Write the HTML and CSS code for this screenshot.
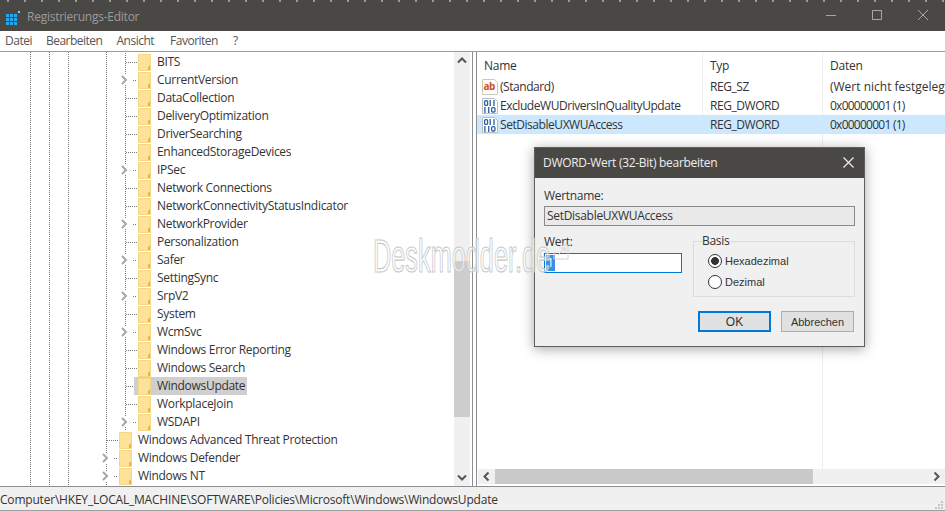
FILE: index.html
```html
<!DOCTYPE html>
<html lang="de">
<head>
<meta charset="utf-8">
<title>Registrierungs-Editor</title>
<link rel="stylesheet" href="styles.css">
</head>
<body>
<svg class="defs" width="0" height="0" aria-hidden="true">
  <symbol id="folder" viewBox="0 0 13 17">
    <path d="M.5 .5H12.500V16.500H.5Z" fill="#fde39a" stroke="#f4d684"/>
    <path d="M10 16V13L12 11V16Z" fill="#e2b64c"/>
  </symbol>
  <symbol id="chev-r" viewBox="0 0 19 10">
    <path d="M3 1L7 5L3 9" fill="none" stroke="#a6a6a6" stroke-width="2"/>
    <path d="M14 5.500H15M16 5.500H17" stroke="#777"/>
  </symbol>
  <symbol id="bin" viewBox="0 0 16 16">
    <path d="M.5 .5H12.500L15.500 3.500V15.500H.5Z" fill="#fff" stroke="#bdbdbd"/>
    <g fill="none" stroke="#2b5fa5" stroke-width="1.300">
      <rect x="2.600" y="2.600" width="3" height="4.800" rx="1.200"/>
      <path d="M8.200 2V8M12 2V8M2.900 9V15M6.700 9V15"/>
      <rect x="9.600" y="9.600" width="3.400" height="4.400" rx="1.200"/>
    </g>
  </symbol>
  <symbol id="ab" viewBox="0 0 16 16">
    <path d="M.5 .5H12.500L15.500 3.500V15.500H.5Z" fill="#fff" stroke="#cfc6bd"/>
    <text x="1.500" y="11" class="abtext">ab</text>
  </symbol>
</svg>

<div class="topstrip"></div>
<header class="titlebar">
  <svg class="appicon" viewBox="0 0 14 14" width="14" height="14">
    <path d="M0 3H3V6H0ZM4 3H7V6H4ZM8 3H11V6H8ZM0 7H3V10H0ZM4 7H7V10H4ZM8 7H11V10H8ZM0 11H3V14H0ZM4 11H7V14H4ZM8 11H11V14H8Z" fill="#2aa7e8"/>
    <path d="M12 0H14V2H12Z" fill="#7fd0f5"/>
  </svg>
  <span class="apptitle">Registrierungs-Editor</span>
  <div class="winctrls">
    <svg viewBox="0 0 10 10" width="10" height="10"><path d="M0 5.500H10" stroke="#a8a8a8"/></svg>
    <svg viewBox="0 0 10 10" width="10" height="10"><path d="M.5 .5H9.500V9.500H.5Z" fill="none" stroke="#a8a8a8"/></svg>
    <svg viewBox="0 0 10 10" width="10" height="10"><path d="M0 0L10 10M10 0L0 10" stroke="#a8a8a8"/></svg>
  </div>
</header>
<nav class="menubar">
  <span>Datei</span><span>Bearbeiten</span><span>Ansicht</span><span class="m-fav">Favoriten</span><span class="m-help">?</span>
</nav>

<main class="panes">
  <section class="treepane">
    <div class="tree">
      <div class="subtree">
        <div class="row lvl2"><i class="exp"></i><svg class="fold"><use href="#folder"/></svg><span class="lbl">BITS</span></div>
        <div class="row lvl2"><svg class="exp"><use href="#chev-r"/></svg><svg class="fold"><use href="#folder"/></svg><span class="lbl">CurrentVersion</span></div>
        <div class="row lvl2"><i class="exp"></i><svg class="fold"><use href="#folder"/></svg><span class="lbl">DataCollection</span></div>
        <div class="row lvl2"><i class="exp"></i><svg class="fold"><use href="#folder"/></svg><span class="lbl">DeliveryOptimization</span></div>
        <div class="row lvl2"><i class="exp"></i><svg class="fold"><use href="#folder"/></svg><span class="lbl">DriverSearching</span></div>
        <div class="row lvl2"><i class="exp"></i><svg class="fold"><use href="#folder"/></svg><span class="lbl">EnhancedStorageDevices</span></div>
        <div class="row lvl2"><svg class="exp"><use href="#chev-r"/></svg><svg class="fold"><use href="#folder"/></svg><span class="lbl">IPSec</span></div>
        <div class="row lvl2"><i class="exp"></i><svg class="fold"><use href="#folder"/></svg><span class="lbl">Network Connections</span></div>
        <div class="row lvl2"><i class="exp"></i><svg class="fold"><use href="#folder"/></svg><span class="lbl">NetworkConnectivityStatusIndicator</span></div>
        <div class="row lvl2"><svg class="exp"><use href="#chev-r"/></svg><svg class="fold"><use href="#folder"/></svg><span class="lbl">NetworkProvider</span></div>
        <div class="row lvl2"><i class="exp"></i><svg class="fold"><use href="#folder"/></svg><span class="lbl">Personalization</span></div>
        <div class="row lvl2"><svg class="exp"><use href="#chev-r"/></svg><svg class="fold"><use href="#folder"/></svg><span class="lbl">Safer</span></div>
        <div class="row lvl2"><i class="exp"></i><svg class="fold"><use href="#folder"/></svg><span class="lbl">SettingSync</span></div>
        <div class="row lvl2"><svg class="exp"><use href="#chev-r"/></svg><svg class="fold"><use href="#folder"/></svg><span class="lbl">SrpV2</span></div>
        <div class="row lvl2"><i class="exp"></i><svg class="fold"><use href="#folder"/></svg><span class="lbl">System</span></div>
        <div class="row lvl2"><svg class="exp"><use href="#chev-r"/></svg><svg class="fold"><use href="#folder"/></svg><span class="lbl">WcmSvc</span></div>
        <div class="row lvl2"><i class="exp"></i><svg class="fold"><use href="#folder"/></svg><span class="lbl">Windows Error Reporting</span></div>
        <div class="row lvl2"><i class="exp"></i><svg class="fold"><use href="#folder"/></svg><span class="lbl">Windows Search</span></div>
        <div class="row lvl2"><i class="exp"></i><span class="hl"><svg class="fold"><use href="#folder"/></svg><span class="lbl">WindowsUpdate</span></span></div>
        <div class="row lvl2"><i class="exp"></i><svg class="fold"><use href="#folder"/></svg><span class="lbl">WorkplaceJoin</span></div>
        <div class="row lvl2"><svg class="exp"><use href="#chev-r"/></svg><svg class="fold"><use href="#folder"/></svg><span class="lbl">WSDAPI</span></div>
      </div>
      <div class="row lvl1"><i class="exp"></i><svg class="fold"><use href="#folder"/></svg><span class="lbl">Windows Advanced Threat Protection</span></div>
      <div class="row lvl1"><svg class="exp"><use href="#chev-r"/></svg><svg class="fold"><use href="#folder"/></svg><span class="lbl">Windows Defender</span></div>
      <div class="row lvl1"><svg class="exp"><use href="#chev-r"/></svg><svg class="fold"><use href="#folder"/></svg><span class="lbl">Windows NT</span></div>
    </div>
    <div class="vscroll">
      <svg class="sbtn" viewBox="0 0 16 17"><path d="M4 10.500L8 6.500L12 10.500" fill="none" stroke="#555" stroke-width="2"/></svg>
      <div class="vtrack"><div class="vthumb"></div></div>
      <svg class="sbtn" viewBox="0 0 16 17"><path d="M4 6.500L8 10.500L12 6.500" fill="none" stroke="#555" stroke-width="2"/></svg>
    </div>
  </section>

  <section class="listpane">
    <div class="list">
      <div class="lrow lhead"><span class="c1 hd">Name</span><span class="c2">Typ</span><span class="c3">Daten</span></div>
      <div class="lrow"><span class="c1"><svg class="ric"><use href="#ab"/></svg>(Standard)</span><span class="c2">REG_SZ</span><span class="c3">(Wert nicht festgelegt)</span></div>
      <div class="lrow"><span class="c1"><svg class="ric"><use href="#bin"/></svg>ExcludeWUDriversInQualityUpdate</span><span class="c2">REG_DWORD</span><span class="c3 hex">0x00000001 (1)</span></div>
      <div class="lrow sel"><span class="c1"><svg class="ric"><use href="#bin"/></svg>SetDisableUXWUAccess</span><span class="c2">REG_DWORD</span><span class="c3 hex">0x00000001 (1)</span></div>
      <div class="lfill"><i class="cf1"></i></div>
    </div>
    <div class="hscroll">
      <svg class="hbtn" viewBox="0 0 17 15"><path d="M10.500 3.500L6.500 7.500L10.500 11.500" fill="none" stroke="#555" stroke-width="2"/></svg>
      <div class="htrack"><div class="hthumb"></div></div>
      <svg class="hbtn" viewBox="0 0 17 15"><path d="M6.500 3.500L10.500 7.500L6.500 11.500" fill="none" stroke="#555" stroke-width="2"/></svg>
    </div>
  </section>
</main>

<footer class="statusbar">
  <span>Computer\HKEY_LOCAL_MACHINE\SOFTWARE\Policies\Microsoft\Windows\WindowsUpdate</span>
  <svg class="grip" viewBox="0 0 10 10" width="10" height="10"><path d="M7 1H9V3H7ZM4 4H6V6H4ZM7 4H9V6H7ZM1 7H3V9H1ZM4 7H6V9H4ZM7 7H9V9H7Z" fill="#c4c4c4"/></svg>
</footer>

<div class="dialog">
  <div class="dtitle"><span>DWORD-Wert (32-Bit) bearbeiten</span>
    <svg viewBox="0 0 11 11" width="11" height="11"><path d="M.5 .5L10.500 10.500M10.500 .5L.5 10.500" stroke="#eee" stroke-width="1.200"/></svg>
  </div>
  <div class="dbody">
    <div class="dlabel">Wertname:</div>
    <div class="namebox">SetDisableUXWUAccess</div>
    <div class="dcols">
      <div class="wert">
        <div class="wertlabel">Wert:</div>
        <div class="valbox"><span class="valsel">1</span></div>
      </div>
      <fieldset class="basis">
        <legend>Basis</legend>
        <div class="radio"><i class="rad on"></i>Hexadezimal</div>
        <div class="radio"><i class="rad"></i>Dezimal</div>
      </fieldset>
    </div>
    <div class="btns">
      <div class="btn def">OK</div>
      <div class="btn">Abbrechen</div>
    </div>
  </div>
</div>

<div class="watermark">Deskmodder.de</div>
<svg class="wmark-arrow" viewBox="0 0 16 16" width="16" height="16"><path d="M1 9V15H15V1H9" fill="none" stroke="#d4d4d4"/><path d="M5 11L12 4M8 4H12V8" fill="none" stroke="#d4d4d4"/></svg>
</body>
</html>
```

FILE: styles.css
```css
* { box-sizing: border-box; }
html, body { margin: 0; padding: 0; }
body {
  position: relative;
  width: 945px;
  height: 511px;
  overflow: hidden;
  background: #fff;
  font-family: "Open Sans", "Liberation Sans", sans-serif;
  font-size: 12px;
  color: #333;
  display: flex;
  flex-direction: column;
}
.defs { position: absolute; }
.abtext { font: 700 10px "Open Sans", sans-serif; fill: #c8501f; }

.topstrip {
  height: 2px;
  flex: none;
  background: repeating-linear-gradient(90deg, #4a4845 0 7px, #9a9a98 7px 9px, #4a4845 9px 17px);
}
.titlebar {
  height: 29px;
  flex: none;
  background: #4a4845;
  display: flex;
  align-items: center;
  padding-left: 6px;
  color: #9b9b9b;
}
.appicon { margin-right: 7px; margin-top: 2px; }
.apptitle { letter-spacing: -.25px; }
.winctrls { margin-left: auto; display: flex; gap: 36px; padding: 0 17px 3px 0; align-items: center; }
.menubar {
  height: 21px;
  flex: none;
  display: flex;
  align-items: center;
  padding: 0 0 1px 5px;
  gap: 14px;
  color: #555;
  letter-spacing: -.5px;
  border-bottom: 1px solid #9a9a9a;
}
.m-fav { margin-left: 2px; }
.m-help { margin-left: 1px; }

.panes { flex: 1; display: flex; min-height: 0; border-bottom: 1px solid #8e8e8e; }

.treepane {
  width: 473px;
  flex: none;
  display: flex;
  border-right: 1px solid #8e8e8e;
  padding-right: 2px;
}
.tree {
  flex: 1;
  padding-top: 1px;
  overflow: hidden;
  background-image:
    linear-gradient(#777 50%, transparent 50%),
    linear-gradient(#777 50%, transparent 50%),
    linear-gradient(#777 50%, transparent 50%),
    linear-gradient(#777 50%, transparent 50%);
  background-size: 1px 2px;
  background-repeat: repeat-y;
  background-position: 30px 0, 49px 0, 68px 0, 106px 0;
}
.subtree {
  height: 378px;
  background-image: linear-gradient(#777 50%, transparent 50%);
  background-size: 1px 2px;
  background-repeat: repeat-y;
  background-position: 125px 0;
}
.row {
  height: 18px;
  display: flex;
  align-items: center;
  white-space: nowrap;
  color: #333;
  letter-spacing: -.3px;
}
.lvl2 { padding-left: 119px; }
.lvl1 { padding-left: 100px; }
.exp { width: 19px; height: 10px; flex: none; display: block; background-color: #fff; }
i.exp {
  background: linear-gradient(90deg, #777 50%, transparent 50%) 0 5px / 2px 1px repeat-x;
  width: 12px;
  margin-left: 7px;
}
.fold { width: 13px; height: 17px; flex: none; margin-right: 6px; }
.lbl { line-height: 18px; }
.hl { display: flex; align-items: center; height: 18px; background: #cfcfcf; margin-left: -4px; padding: 0 2px 0 4px; }

.vscroll {
  width: 16px;
  flex: none;
  background: #f0f0f0;
  display: flex;
  flex-direction: column;
}
.sbtn { width: 16px; height: 17px; flex: none; display: block; }
.vtrack { flex: 1; padding-top: 192px; padding-bottom: 52px; display: flex; }
.vthumb { flex: 1; background: #cdcdcd; }

.listpane { flex: 1; margin-left: 3px; border-left: 1px solid #8e8e8e; display: flex; flex-direction: column; min-width: 0; }
.list { flex: 1; display: flex; flex-direction: column; padding-top: 1px; min-height: 0; overflow: hidden; }
.lrow { height: 19px; display: flex; align-items: center; white-space: nowrap; letter-spacing: -.45px; flex: none; padding-left: 1px; }
.lhead { height: 24px; letter-spacing: -.25px; }
.lrow.sel { background: #cce8ff; }
.c1 { width: 225px; flex: none; display: flex; align-items: center; padding-left: 4px; border-right: 1px solid #eee; height: 100%; }
.c1.hd { padding-left: 6px; }
.c2 { width: 120px; flex: none; padding-left: 7px; border-right: 1px solid #eee; height: 100%; display: flex; align-items: center; }
.c3 { padding-left: 7px; letter-spacing: 0; }
.lhead .c3 { letter-spacing: -.25px; }
.c3.hex { letter-spacing: -.75px; }
.sel .c1, .sel .c2 { border-right-color: #cce8ff; }
.ric { width: 16px; height: 16px; margin-right: 2px; flex: none; }
.lfill { flex: 1; display: flex; padding-left: 226px; }
.cf1 { width: 120px; border-right: 1px solid #eee; }

.hscroll { height: 15px; flex: none; background: #f0f0f0; display: flex; margin-bottom: 2px; margin-left: 1px; }
.hbtn { width: 17px; height: 15px; flex: none; display: block; }
.htrack { flex: 1; display: flex; }
.hthumb { width: 318px; background: #c9c9c9; }

.statusbar {
  height: 24px;
  flex: none;
  background: #f0f0f0;
  border-bottom: 1px solid #a0a0a0;
  display: flex;
  align-items: center;
  justify-content: space-between;
  padding-top: 2px;
  color: #333;
  letter-spacing: -.2px;
}
.grip { align-self: flex-end; margin-right: 1px; }

.dialog {
  position: absolute;
  left: 534px;
  top: 147px;
  width: 331px;
  height: 200px;
  background: #f0f0f0;
  border: 1px solid #5e5e5e;
  box-shadow: 0 2px 12px rgba(0,0,0,.35);
  display: flex;
  flex-direction: column;
  z-index: 2;
}
.dtitle {
  height: 30px;
  flex: none;
  background: #4a4845;
  color: #eee;
  display: flex;
  align-items: center;
  justify-content: space-between;
  padding: 0 10px 2px 8px;
  letter-spacing: -.3px;
}
.dbody { flex: 1; padding: 9px 9px 0 9px; color: #333; letter-spacing: -.3px; }
.dlabel { height: 19px; line-height: 18px; }
.namebox {
  height: 20px;
  background: #e9e9e9;
  border: 1px solid #8a8a8a;
  line-height: 17px;
  padding-left: 2px;
}
.dcols { display: flex; margin-top: 8px; height: 63px; }
.wert { width: 149px; flex: none; }
.wertlabel { height: 19px; line-height: 16px; }
.valbox { width: 138px; height: 20px; background: #fff; border: 1px solid #0078d7; padding: 1px; line-height: 16px; }
.valsel { display: inline-block; background: #3a8ee6; color: #fff; padding: 0 1px; height: 16px; }
.basis {
  width: 162px;
  height: 63px;
  margin: 0;
  padding: 2px 0 0 14px;
  border: 1px solid #dcdcdc;
}
.basis legend { padding: 0; margin-left: -6px; line-height: 14px; }
.radio { height: 21px; display: flex; align-items: center; gap: 3px; font: 11px "Liberation Sans", sans-serif; letter-spacing: 0; }
.rad { width: 14px; height: 14px; border-radius: 50%; border: 1px solid #333; background: #fff; display: block; }
.rad.on { background: radial-gradient(circle, #333 0 3.6px, #fff 4.2px); }
.btns { display: flex; gap: 10px; margin-top: 14px; padding-left: 154px; }
.btn {
  width: 73px;
  height: 21px;
  background: #e1e1e1;
  border: 1px solid #adadad;
  display: flex;
  align-items: center;
  justify-content: center;
  font: 11px "Liberation Sans", sans-serif;
  letter-spacing: 0;
}
.btn.def { border: 2px solid #0078d7; font-size: 12px; }

.watermark {
  position: absolute;
  left: 373px;
  top: 228px;
  font-family: "Liberation Sans", sans-serif;
  font-size: 46px;
  line-height: 56px;
  color: rgba(255,255,255,.5);
  -webkit-text-stroke: 1.200px #c8c8c8;
  transform: scaleX(.55);
  transform-origin: left top;
  white-space: nowrap;
  z-index: 3;
  pointer-events: none;
}
.wmark-arrow { position: absolute; left: 553px; top: 244px; z-index: 3; }
```
